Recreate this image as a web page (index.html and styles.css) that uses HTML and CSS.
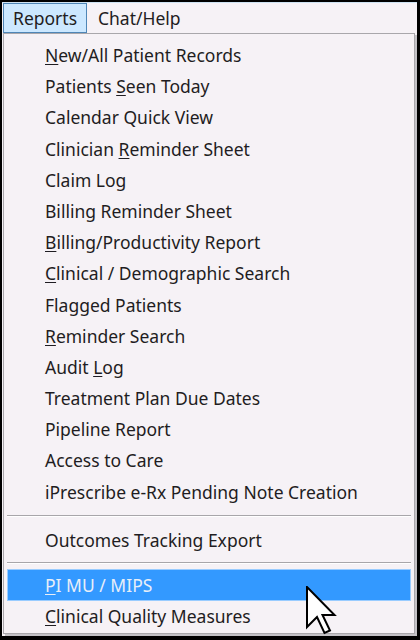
FILE: index.html
```html
<!DOCTYPE html>
<html>
<head>
<meta charset="utf-8">
<link rel="stylesheet" href="styles.css">
</head>
<body>
<div class="screen">
  <div class="app">
    <div class="menubar">
      <div class="top open">Reports</div>
      <div class="top">Chat/Help</div>
    </div>
    <div class="dropdown">
      <div class="item"><u>N</u>ew/All Patient Records</div>
      <div class="item">Patients <u>S</u>een Today</div>
      <div class="item">Calendar Quick View</div>
      <div class="item">Clinician <u>R</u>eminder Sheet</div>
      <div class="item">Claim Log</div>
      <div class="item">Billing Reminder Sheet</div>
      <div class="item"><u>B</u>illing/Productivity Report</div>
      <div class="item"><u>C</u>linical / Demographic Search</div>
      <div class="item">Flagged Patients</div>
      <div class="item"><u>R</u>eminder Search</div>
      <div class="item">Audit <u>L</u>og</div>
      <div class="item">Treatment Plan Due Dates</div>
      <div class="item">Pipeline Report</div>
      <div class="item">Access to Care</div>
      <div class="item">iPrescribe e-Rx Pending Note Creation</div>
      <div class="sep sep1"></div>
      <div class="item">Outcomes Tracking Export</div>
      <div class="sep sep2"></div>
      <div class="item selected"><u>P</u>I MU / MIPS</div>
      <div class="item"><u>C</u>linical Quality Measures</div>
      <svg class="cursor" width="32" height="50" viewBox="0 0 32 50">
        <polygon points="1,1 1,41 11,31 18.5,47 24,44.5 16.5,29 28.5,29" fill="#ffffff" stroke="#000000" stroke-width="2" stroke-linejoin="miter"/>
      </svg>
    </div>
  </div>
</div>
</body>
</html>
```

FILE: styles.css
```css
html, body {
  margin: 0;
  padding: 0;
  background: #000;
}
.screen {
  width: 420px;
  height: 640px;
  box-sizing: border-box;
  padding: 2px 3px 4px 2px;
}
.app {
  height: 100%;
  background: #f6f2f6;
  display: flex;
  flex-direction: column;
  font-family: "Noto Sans", "Open Sans", sans-serif;
  font-size: 17.5px;
  color: #1f1d22;
  border-top: 1px solid #cfe3f3;
  box-sizing: border-box;
}
.menubar {
  height: 30px;
  display: flex;
  align-items: stretch;
  padding-left: 1px;
}
.top {
  line-height: 28px;
  padding: 0 10px;
  box-sizing: border-box;
  border: 1px solid transparent;
  white-space: nowrap;
}
.top.open {
  width: 84px;
  background: #cce8ff;
  border-color: #4f86b6;
  padding-left: 9px;
}
.dropdown {
  position: relative;
  flex: 1;
  margin-left: 1px;
  margin-bottom: 2px;
  margin-right: 2px;
  border: 1px solid #a9a7ab;
  box-shadow: 2px 2px 0 #c4c2c6;
  padding-top: 6px;
  box-sizing: border-box;
}
.item {
  height: 31.2px;
  line-height: 31.2px;
  padding-left: 38px;
  margin: 0 3px;
  box-sizing: border-box;
  white-space: nowrap;
}
.item u {
  text-decoration-thickness: 1px;
  text-underline-offset: 2px;
}
.item.selected {
  height: 32px;
  line-height: 30px;
  background: #3399ff;
  border: 1px solid #99ccff;
  padding-left: 37px;
  color: #e8eef8;
}
.sep {
  margin: 0 3px;
  border-top: 1px solid #a8a6aa;
  border-bottom: 1px solid #ffffff;
}
.sep1 {
  margin-top: 7px;
  margin-bottom: 8px;
}
.sep2 {
  margin-top: 6px;
  margin-bottom: 5px;
}
.cursor {
  position: absolute;
  left: 302px;
  top: 552px;
}
```
